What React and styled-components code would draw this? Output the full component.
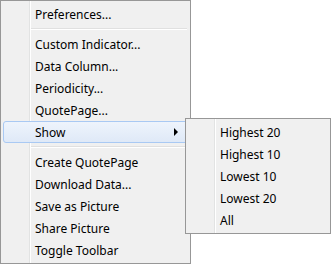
import React from 'react'
import styled, { createGlobalStyle } from 'styled-components'

const Global = createGlobalStyle`
  html, body { margin: 0; padding: 0; background: #fff; }
  body { font-family: "Noto Sans", "Open Sans", sans-serif; }
`

const Stage = styled.div`
  position: relative;
  width: 331px;
  height: 264px;
  overflow: hidden;
`

const Menu = styled.div`
  box-sizing: border-box;
  width: ${p => p.w}px;
  border: 1px solid #979797;
  padding: 2px;
  background:
    linear-gradient(to right, transparent 28px, #e2e3e3 28px, #e2e3e3 29px, #fff 29px, #fff 30px, transparent 30px),
    #f0f0f0;
  background-origin: border-box;
  background-position: 1px 0;
  background-repeat: no-repeat;
  display: flex;
  flex-direction: column;
`

const SubMenu = styled(Menu)`
  position: absolute;
  left: 185px;
  top: 118px;
`

const Item = styled.div`
  position: relative;
  box-sizing: border-box;
  height: 22px;
  line-height: 21px;
  padding-left: 31px;
  font-size: 12px;
  color: #000;
  white-space: nowrap;
  border: 1px solid ${p => (p.active ? '#a9c9f3' : 'transparent')};
  border-radius: 3px;
  background: ${p => (p.active ? 'linear-gradient(#eef4fc, #dfe9f7)' : 'transparent')};
`

const Arrow = styled.i`
  position: absolute;
  right: 9px;
  top: 6px;
  width: 0;
  height: 0;
  border-top: 4px solid transparent;
  border-bottom: 4px solid transparent;
  border-left: 4px solid #000;
`

const Separator = styled.div`
  height: 8px;
  margin-left: 28px;
  margin-right: 1px;
  display: flex;
  flex-direction: column;
  justify-content: center;
  &::before { content: ''; height: 1px; background: #e0e0e0; }
  &::after { content: ''; height: 1px; background: #fff; }
`

const groups = [
  ['Preferences...'],
  ['Custom Indicator...', 'Data Column...', 'Periodicity...', 'QuotePage...', 'Show'],
  ['Create QuotePage', 'Download Data...', 'Save as Picture', 'Share Picture', 'Toggle Toolbar'],
]

const showItems = ['Highest 20', 'Highest 10', 'Lowest 10', 'Lowest 20', 'All']

export default function App() {
  return (
    <Stage>
      <Global />
      <Menu w={191}>
        {groups.map((g, gi) => (
          <React.Fragment key={gi}>
            {gi > 0 && <Separator />}
            {g.map(label => (
              <Item key={label} active={label === 'Show'}>
                {label}
                {label === 'Show' && <Arrow />}
              </Item>
            ))}
          </React.Fragment>
        ))}
      </Menu>
      <SubMenu w={146}>
        {showItems.map(label => (
          <Item key={label}>{label}</Item>
        ))}
      </SubMenu>
    </Stage>
  )
}
